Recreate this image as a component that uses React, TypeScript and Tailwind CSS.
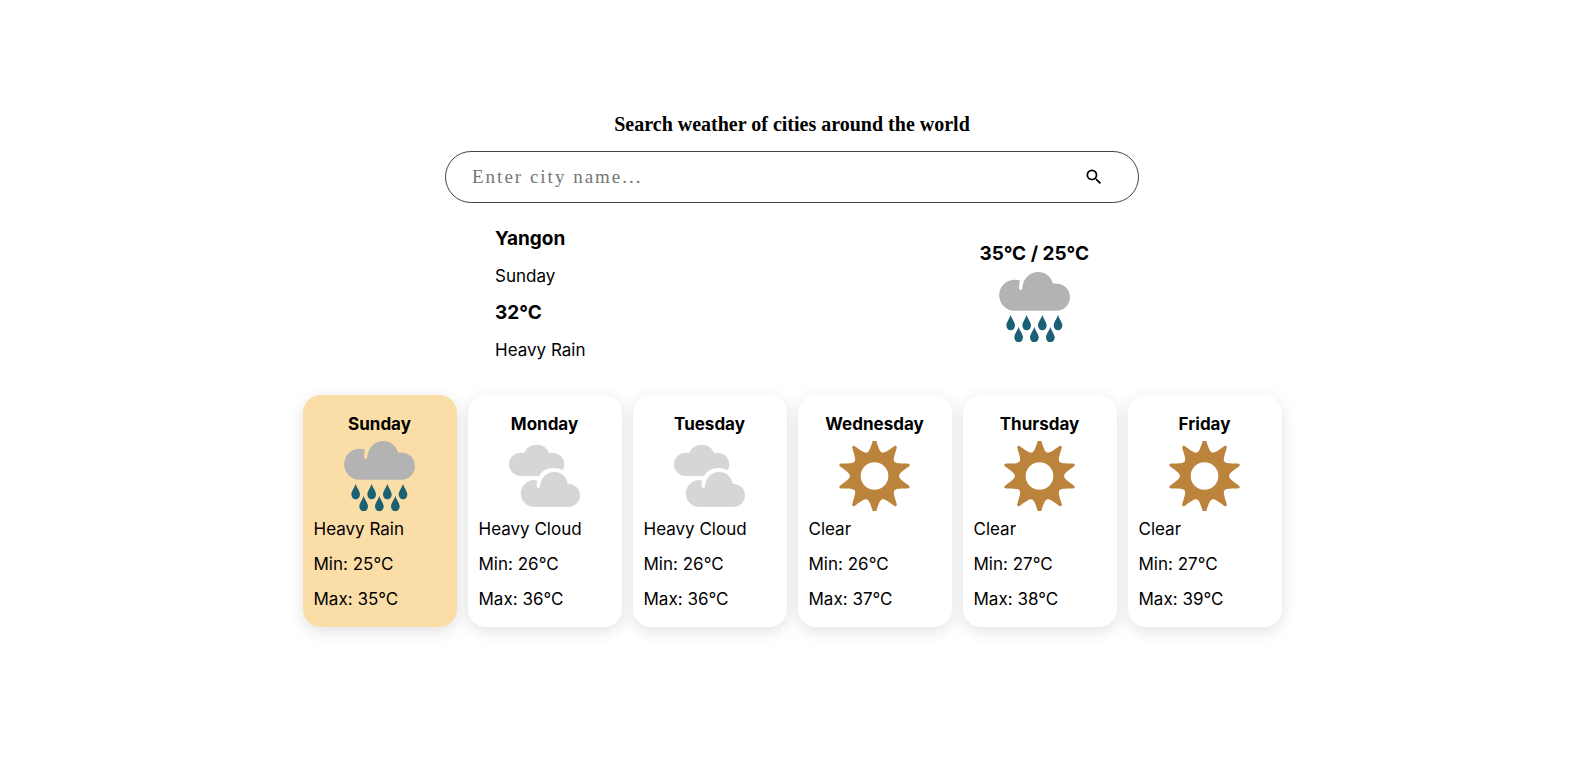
import type { ComponentType } from "react";

function HeavyRain() {
  const drops = [
    [35, 128],
    [83, 128],
    [130, 128],
    [177, 128],
    [59, 164],
    [106, 164],
    [154, 164],
  ];
  return (
    <svg viewBox="0 0 213 210" className="h-[70px] w-[71px]" aria-hidden="true">
      <path
        fill="#b3b3b3"
        d="M47 116 A46.5 46.5 0 1 1 47 23 Q56 23 63 26 Q60 34 60 48 A5 6 0 0 0 70 48 C72 20 92 0 118 0 C139 0 157 14 162 35 C190 31 213 49 213 75 A41 41 0 0 1 172 116 Z"
      />
      {drops.map(([x, y]) => (
        <path
          key={`${x}-${y}`}
          fill="#1b6174"
          transform={`translate(${x} ${y})`}
          d="M0 0 C3 12 13 22 13 32 C13 41 7 47 0 47 C-7 47 -13 41 -13 32 C-13 22 -3 12 0 0 Z"
        />
      ))}
    </svg>
  );
}

function HeavyCloud() {
  return (
    <svg viewBox="0 0 213 210" className="h-[70px] w-[71px]" aria-hidden="true">
      <g fill="#d6d6d6">
        <path d="M35 105 A35 35 0 0 1 35 35 Q41 35 46 36 C52 20 66 11 83 11 C101 11 115 21 121 36 C146 32 166 48 166 70 Q166 80 161 88 C134 74 102 83 90 105 Z" />
        <path d="M76 198 A40.5 40.5 0 0 1 76 117 Q81 117 85 119 Q82 128 83 136 A5 5 0 0 0 93 136 C95 110 112 93 136 93 C156 93 173 107 176 128 C197 128 213 143 213 163 A35 35 0 0 1 178 198 Z" />
      </g>
    </svg>
  );
}

function Clear() {
  const rays = [0, 36, 72, 108, 144, 180, 216, 252, 288, 324];
  return (
    <svg viewBox="0 0 213 210" className="h-[70px] w-[71px]" aria-hidden="true">
      <g fill="#bb833b">
        {rays.map((angle) => (
          <path
            key={angle}
            transform={`translate(106.5 105) rotate(${angle})`}
            d="M-23 -70 C-16 -73 -13 -82 -6 -103 Q-4 -111 0 -111 Q4 -111 6 -103 C13 -82 16 -73 23 -70 L15 -48 L-15 -48 Z"
          />
        ))}
      </g>
      <circle cx="106.5" cy="105" r="57" fill="none" stroke="#bb833b" strokeWidth="31" />
    </svg>
  );
}

const icons: Record<string, ComponentType> = {
  "Heavy Rain": HeavyRain,
  "Heavy Cloud": HeavyCloud,
  Clear,
};

const forecast = [
  { day: "Sunday", state: "Heavy Rain", min: 25, max: 35 },
  { day: "Monday", state: "Heavy Cloud", min: 26, max: 36 },
  { day: "Tuesday", state: "Heavy Cloud", min: 26, max: 36 },
  { day: "Wednesday", state: "Clear", min: 26, max: 37 },
  { day: "Thursday", state: "Clear", min: 27, max: 38 },
  { day: "Friday", state: "Clear", min: 27, max: 39 },
];

export default function App() {
  return (
    <main className="flex min-h-screen flex-col items-center bg-white px-4 pt-28 pb-12 pr-5 font-['Inter',sans-serif] text-[17px] leading-6 text-black">
      <h1 className="font-['Liberation_Serif',serif] text-xl leading-6 font-bold">
        <label htmlFor="city">Search weather of cities around the world</label>
      </h1>

      <form
        className="mt-[15px] flex h-[52px] w-full max-w-[694px] items-center rounded-full border border-[#444] pr-[34px] pl-[26px]"
        onSubmit={(event) => event.preventDefault()}
      >
        <input
          id="city"
          type="text"
          placeholder="Enter city name..."
          className="min-w-0 flex-1 bg-transparent font-['Liberation_Serif',serif] text-[19px] tracking-[2px] outline-none placeholder:text-[#757575]"
        />
        <button type="submit" aria-label="Search" className="flex">
          <svg viewBox="0 0 24 24" className="size-5" aria-hidden="true">
            <path d="M15.5 14h-.79l-.28-.27A6.471 6.471 0 0 0 16 9.5 6.5 6.5 0 1 0 9.5 16c1.61 0 3.09-.59 4.23-1.57l.27.28v.79l5 4.99L20.49 19l-4.99-5zm-6 0C7.01 14 5 11.99 5 9.5S7.01 5 9.5 5 14 7.01 14 9.5 11.99 14 9.5 14z" />
          </svg>
        </button>
      </form>

      <section className="mt-6 flex w-full max-w-[594px] items-center justify-between">
        <div className="flex flex-col gap-[13px]">
          <h2 className="text-[19px] font-bold">Yangon</h2>
          <p>Sunday</p>
          <p className="text-[19px] font-bold">32°C</p>
          <p>Heavy Rain</p>
        </div>
        <div className="flex flex-col items-center gap-[6px] pb-[5px]">
          <p className="text-[19px] font-bold">35°C / 25°C</p>
          <HeavyRain />
        </div>
      </section>

      <ul className="mt-[33px] flex flex-wrap justify-center gap-[11px]">
        {forecast.map(({ day, state, min, max }, index) => {
          const Icon = icons[state];
          return (
            <li
              key={day}
              className={`flex w-[154px] flex-col gap-[6px] rounded-[18px] px-[11px] pt-[17px] pb-4 shadow-[0_4px_16px_rgba(0,0,0,0.12)] ${
                index === 0 ? "bg-[#fbdda7]" : "bg-white"
              }`}
            >
              <div className="flex flex-col items-center gap-[5px]">
                <h3 className="font-bold">{day}</h3>
                <Icon />
              </div>
              <div className="flex flex-col gap-[11px]">
                <p>{state}</p>
                <p>Min: {min}°C</p>
                <p>Max: {max}°C</p>
              </div>
            </li>
          );
        })}
      </ul>
    </main>
  );
}
